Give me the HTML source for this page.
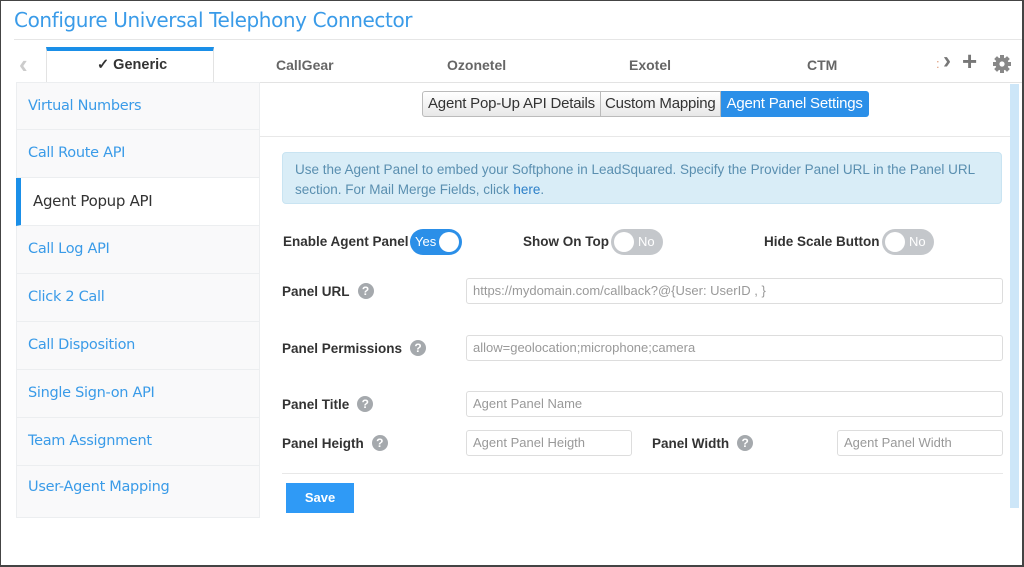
<!DOCTYPE html>
<html><head><meta charset="utf-8"><style>
*{box-sizing:border-box;margin:0;padding:0}
body{width:1024px;height:567px;background:#fff;font-family:"Liberation Sans",sans-serif;position:relative;overflow:hidden}
.a{position:absolute}
.frame{left:0;top:0;width:1024px;height:567px;border:1px solid #444;border-right-width:2px;border-bottom-width:2px}
.title{left:14px;top:8px;font-size:20px;color:#3a9be8;font-family:"DejaVu Sans",sans-serif;letter-spacing:-0.4px}
.tab{top:57px;color:#666;font-weight:bold;font-family:"Liberation Sans",sans-serif;font-size:14px}
.side{left:16px;width:244px;height:48px;background:#f9f9fa;border:1px solid #eceef0;border-top:none;color:#3a9be8;padding-left:11px;line-height:46px;font-family:"DejaVu Sans",sans-serif;font-size:14.5px;letter-spacing:-0.3px}
.lbl{font-weight:bold;color:#333;font-family:"Liberation Sans",sans-serif;font-size:13.5px}
.q{display:inline-block;width:16px;height:16px;border-radius:50%;background:#a5a9ad;color:#fff;font-size:12px;text-align:center;line-height:16px;font-weight:bold;margin-left:8px;vertical-align:1px}
.inp{height:26px;border:1px solid #ddd;border-radius:3px;font-size:13px;color:#999;padding-left:6px;line-height:24px}
.tg{height:26px;border-radius:13px;font-size:13px;color:#fff;line-height:26px}
.knob{position:absolute;top:3px;width:20px;height:20px;border-radius:50%;background:#fff}
</style></head><body>
<div class="a frame"></div>
<div class="a title">Configure Universal Telephony Connector</div>
<div class="a" style="left:14px;top:39px;width:1008px;height:1px;background:#e6e6e6"></div>
<div class="a" style="left:19px;top:49px;color:#ccc;font-size:26px;font-weight:bold">&#8249;</div>
<div class="a" style="left:46px;top:47px;width:168px;height:36px;border:1px solid #e3e3e3;border-top:4px solid #1a8fe8;border-bottom:none;background:#fff"></div>
<div class="a tab" style="left:97px;color:#333;font-size:14.5px">✓ Generic</div>
<div class="a tab" style="left:276px">CallGear</div>
<div class="a tab" style="left:447px">Ozonetel</div>
<div class="a tab" style="left:629px">Exotel</div>
<div class="a tab" style="left:807px">CTM</div>
<div class="a" style="left:936px;top:56px;color:#e0a080;font-size:13px">:</div>
<div class="a" style="left:943px;top:47px;color:#777;font-size:24px;font-weight:bold">›</div>
<div class="a" style="left:962px;top:46px;color:#777;font-size:26px;font-weight:bold">+</div>
<svg class="a" style="left:992px;top:54px" width="20" height="20" viewBox="0 0 20 20"><g fill="#888"><circle cx="10" cy="10" r="6.5"/><g stroke="#888" stroke-width="4"><line x1="10" y1="1" x2="10" y2="19"/><line x1="1" y1="10" x2="19" y2="10"/><line x1="3.6" y1="3.6" x2="16.4" y2="16.4"/><line x1="16.4" y1="3.6" x2="3.6" y2="16.4"/></g></g><circle cx="10" cy="10" r="2.6" fill="#fff"/></svg>
<div class="a" style="left:214px;top:82px;width:808px;height:1px;background:#e3e3e3"></div>
<div class="a" style="left:16px;top:82px;width:198px;height:1px;background:#e3e3e3"></div>
<div class="a side" style="top:82px;border-top:1px solid #eceef0">Virtual Numbers</div>
<div class="a side" style="top:130px">Call Route API</div>
<div class="a side" style="top:178px;background:#fff;color:#333;padding-left:12px;border-left:5px solid #1a8fe8;font-size:15px">Agent Popup API</div>
<div class="a side" style="top:226px">Call Log API</div>
<div class="a side" style="top:274px">Click 2 Call</div>
<div class="a side" style="top:322px">Call Disposition</div>
<div class="a side" style="top:370px">Single Sign-on API</div>
<div class="a side" style="top:418px">Team Assignment</div>
<div class="a side" style="top:466px;height:52px;line-height:42px">User-Agent Mapping</div>
<div class="a" style="left:1010px;top:84px;width:9px;height:424px;background:#cde6f8"></div>
<div class="a" style="left:422px;top:91px;height:26px;display:flex;font-size:15px;color:#333;letter-spacing:-0.2px">
<div style="border:1px solid #bbb;background:linear-gradient(#fff,#e8e8e8);padding:0 5px;line-height:24px;border-radius:3px 0 0 3px">Agent Pop-Up API Details</div>
<div style="border:1px solid #bbb;border-left:none;background:linear-gradient(#fff,#e8e8e8);padding:0 4px;line-height:24px">Custom Mapping</div>
<div style="background:#2b8fe8;color:#fff;border:1px solid #2b8fe8;padding:0 5px;line-height:24px;border-radius:0 3px 3px 0">Agent Panel Settings</div></div>
<div class="a" style="left:260px;top:136px;width:750px;height:1px;background:#e8e8e8"></div>
<div class="a" style="left:282px;top:152px;width:720px;height:52px;background:#d9edf7;border:1px solid #c9e4f2;border-radius:4px;color:#5a8fb0;padding:7px 12px;line-height:20px;font-family:'Liberation Sans',sans-serif;font-size:13.5px">Use the Agent Panel to embed your Softphone in LeadSquared. Specify the Provider Panel URL in the Panel URL section. For Mail Merge Fields, click <span style="color:#2b7fc8">here</span>.</div>
<div class="a lbl" style="left:283px;top:234px">Enable Agent Panel</div>
<div class="a tg" style="left:410px;top:229px;width:52px;background:#2b8fe8;padding-left:5px">Yes<div class="knob" style="left:29px"></div></div>
<div class="a lbl" style="left:523px;top:234px">Show On Top</div>
<div class="a tg" style="left:611px;top:229px;width:52px;background:#c4c7cb;padding-left:27px">No<div class="knob" style="left:3px"></div></div>
<div class="a lbl" style="left:764px;top:234px">Hide Scale Button</div>
<div class="a tg" style="left:882px;top:229px;width:52px;background:#c4c7cb;padding-left:27px">No<div class="knob" style="left:3px"></div></div>
<div class="a lbl" style="left:282px;top:283px">Panel URL<span class="q">?</span></div>
<div class="a inp" style="left:466px;top:278px;width:537px">https://mydomain.com/callback?@{User: UserID , }</div>
<div class="a lbl" style="left:282px;top:340px">Panel Permissions<span class="q">?</span></div>
<div class="a inp" style="left:466px;top:335px;width:537px">allow=geolocation;microphone;camera</div>
<div class="a lbl" style="left:282px;top:396px">Panel Title<span class="q">?</span></div>
<div class="a inp" style="left:466px;top:391px;width:537px">Agent Panel Name</div>
<div class="a lbl" style="left:282px;top:435px">Panel Heigth<span class="q">?</span></div>
<div class="a inp" style="left:466px;top:430px;width:166px">Agent Panel Heigth</div>
<div class="a lbl" style="left:652px;top:435px">Panel Width<span class="q">?</span></div>
<div class="a inp" style="left:837px;top:430px;width:166px">Agent Panel Width</div>
<div class="a" style="left:282px;top:473px;width:721px;height:1px;background:#e8e8e8"></div>
<div class="a" style="left:286px;top:483px;width:68px;height:30px;background:#2f9af6;color:#fff;font-weight:bold;font-size:13px;text-align:center;line-height:30px">Save</div>
</body></html>
